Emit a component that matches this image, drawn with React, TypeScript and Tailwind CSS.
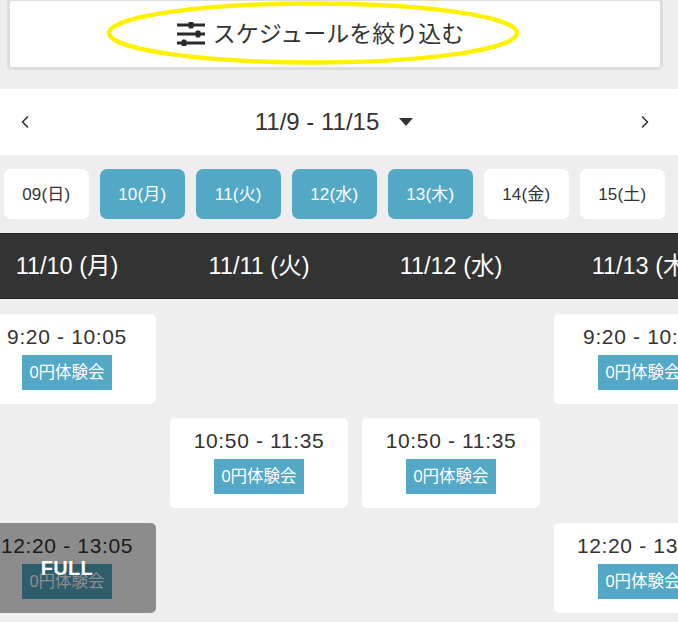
import { ChevronLeft, ChevronRight } from 'lucide-react';

const days = [
  { label: '09(日)', active: false },
  { label: '10(月)', active: true },
  { label: '11(火)', active: true },
  { label: '12(水)', active: true },
  { label: '13(木)', active: true },
  { label: '14(金)', active: false },
  { label: '15(土)', active: false },
];

const headers = ['11/10 (月)', '11/11 (火)', '11/12 (水)', '11/13 (木)'];

// null = no lesson in that cell
const rows: ({ time: string; full?: boolean } | null)[][] = [
  [{ time: '9:20 - 10:05' }, null, null, { time: '9:20 - 10:05' }],
  [null, { time: '10:50 - 11:35' }, { time: '10:50 - 11:35' }, null],
  [{ time: '12:20 - 13:05', full: true }, null, null, { time: '12:20 - 13:05' }],
];

function FilterIcon() {
  return (
    <svg width="28" height="24" viewBox="0 0 28 24" className="text-[#2b2b2b]">
      <g fill="currentColor">
        <rect x="0" y="1.5" width="28" height="3" />
        <rect x="0" y="10.5" width="28" height="3" />
        <rect x="0" y="19.5" width="28" height="3" />
        <rect x="11.5" y="-0.5" width="5" height="7" rx="1.5" />
        <rect x="18.5" y="8.5" width="5" height="7" rx="1.5" />
        <rect x="4.5" y="17.5" width="5" height="7" rx="1.5" />
      </g>
    </svg>
  );
}

function LessonCard({ time, full }: { time: string; full?: boolean }) {
  return (
    <div className="relative h-[90px] rounded-[5px] bg-white overflow-hidden flex flex-col items-center pt-[11px]">
      <p className="text-[21px] leading-[24px] tracking-[0.65px] whitespace-nowrap text-[#333]">{time}</p>
      <span className="mt-[6px] w-[90px] h-[35px] bg-[#53a8c6] text-white text-[16.5px] flex items-center justify-center">
        0円体験会
      </span>
      {full && (
        <div className="absolute inset-0 bg-black/45 flex items-center justify-center">
          <span className="text-white font-bold text-[20px] tracking-[0.3px]">FULL</span>
        </div>
      )}
    </div>
  );
}

export default function App() {
  return (
    <div
      className="w-[678px] h-[622px] overflow-hidden bg-[#eeeeee] text-[#333]"
      style={{ fontFamily: '"Liberation Sans", "Noto Sans CJK JP", sans-serif' }}
    >
      {/* Filter button */}
      <div className="relative mx-[7px] mt-[-2px] h-[72px] w-[656px] rounded-[5px] border-[3px] border-[#dddddd] bg-white flex items-center justify-center gap-[8px] pr-[29px]">
        <FilterIcon />
        <span className="text-[23px] text-[#333]">スケジュールを絞り込む</span>
        <svg width="414" height="64" viewBox="0 0 414 64" className="absolute left-[96px] top-0">
          <ellipse cx="207" cy="32" rx="204" ry="29.5" fill="none" stroke="#fff200" strokeWidth="4.5" />
        </svg>
      </div>

      {/* Week nav */}
      <div className="mt-[19px] h-[66px] bg-white flex items-center justify-between pl-[15px] pr-[23px]">
        <ChevronLeft className="w-[20px] h-[20px]" strokeWidth={2} />
        <div className="flex items-center gap-[20px] ml-[-2px]">
          <span className="text-[24px]">11/9 - 11/15</span>
          <span className="w-0 h-0 border-x-[7.5px] border-x-transparent border-t-[8px] border-t-[#333]" />
        </div>
        <ChevronRight className="w-[20px] h-[20px]" strokeWidth={2} />
      </div>

      {/* Day tabs */}
      <div className="mt-[14px] ml-[3.5px] flex gap-[10.5px]">
        {days.map(d => (
          <div
            key={d.label}
            className={
              d.active
                ? 'w-[85.5px] h-[50px] pt-[1px] rounded-[7px] bg-[#53a8c6] text-white text-[17px] tracking-[0.2px] flex items-center justify-center'
                : 'w-[85.5px] h-[50px] pt-[1px] rounded-[7px] bg-white text-[#333] text-[17px] tracking-[0.2px] flex items-center justify-center'
            }
          >
            {d.label}
          </div>
        ))}
      </div>

      {/* Schedule */}
      <div className="mt-[14px] overflow-hidden">
        <div className="h-[66px] bg-[#333333] border-y border-[#222] overflow-hidden">
          <div className="ml-[-22px] grid grid-cols-[repeat(4,178px)] gap-x-[14px] h-full">
            {headers.map(h => (
              <div key={h} className="flex items-center justify-center text-white text-[23.5px] pt-[1px] whitespace-nowrap">
                {h}
              </div>
            ))}
          </div>
        </div>
        <div className="ml-[-22px] mt-[14.8px] grid grid-cols-[repeat(4,178px)] gap-x-[14px] gap-y-[14.5px]">
          {rows.flatMap((row, i) =>
            row.map((cell, j) =>
              cell ? <LessonCard key={`${i}-${j}`} time={cell.time} full={cell.full} /> : <div key={`${i}-${j}`} />
            )
          )}
        </div>
      </div>
    </div>
  );
}
